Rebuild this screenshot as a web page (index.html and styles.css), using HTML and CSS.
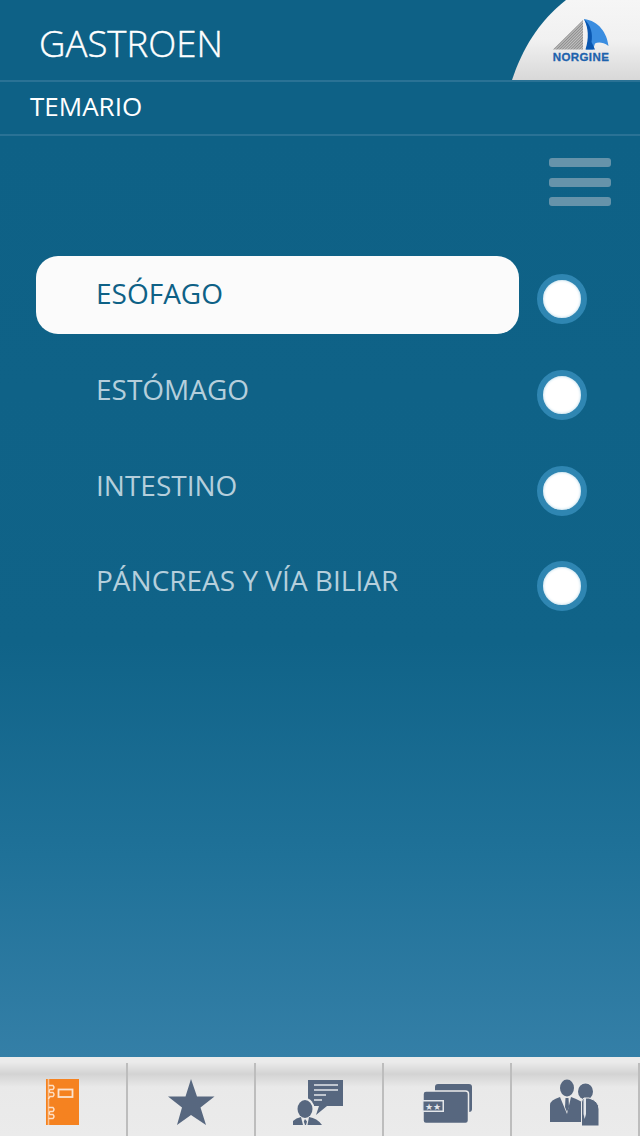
FILE: index.html
```html
<!DOCTYPE html>
<html lang="en">
<head>
    <meta charset="UTF-8">
    <meta name="viewport" content="width=device-width, initial-scale=1.0">
    <title>Gastroen</title>
    <link rel="stylesheet" href="styles.css">
</head>
<body>
    <div class="app">
        <header class="top">
            <h1 class="brand">GASTROEN</h1>
            <svg class="logo" width="128" height="80" viewBox="0 0 128 80">
                <defs>
                    <linearGradient id="corner" x1="0" y1="0" x2="0" y2="1">
                        <stop offset="0" stop-color="#f6f6f6"/>
                        <stop offset="0.5" stop-color="#f1f1f1"/>
                        <stop offset="1" stop-color="#d8d8d8"/>
                    </linearGradient>
                    <pattern id="hatch" width="2" height="2" patternUnits="userSpaceOnUse" patternTransform="rotate(45)">
                        <rect width="2" height="2" fill="#c4c4c4"/>
                        <rect width="1" height="2" fill="#8c8c8c"/>
                    </pattern>
                </defs>
                <path d="M0 80C10 50 26 22 54 0H128V80Z" fill="url(#corner)"/>
                <path d="M41 49.5L71 20V49.5Z" fill="url(#hatch)"/>
                <path d="M72 19C87 21 95 33 96.5 46C91 42 86 42 83 43.5L81 49.5H74C78 38 77 28 72 19Z" fill="#3a8de0"/>
                <path d="M72 19C79 25 81 34 79.5 42L83 49.5H73.5C77 38 76.5 28 72 19Z" fill="#0a57b0"/>
                <text class="logo-text" x="69" y="60.5" text-anchor="middle">NORGINE</text>
            </svg>
        </header>
        <div class="subtitle">TEMARIO</div>

        <main class="content">
            <div class="menu-btn">
                <span></span>
                <span></span>
                <span></span>
            </div>
            <ul class="topics">
                <li class="topic active"><span class="topic-label">ESÓFAGO</span><span class="dot"></span></li>
                <li class="topic"><span class="topic-label">ESTÓMAGO</span><span class="dot"></span></li>
                <li class="topic"><span class="topic-label">INTESTINO</span><span class="dot"></span></li>
                <li class="topic"><span class="topic-label">PÁNCREAS Y VÍA BILIAR</span><span class="dot"></span></li>
            </ul>
        </main>

        <nav class="tabs">
            <div class="tab">
                <svg width="60" height="50" viewBox="0 0 60 50">
                    <rect x="13" y="2" width="33" height="46" fill="#f58220"/>
                    <path d="M15.5 2V48" stroke="#fbc08e" stroke-width="1.5"/>
                    <path d="M15.5 8.5H20Q22 10.5 20 12.5H17Q15.5 14.5 17 15.5H20Q22 17.5 20 19.5H17Q15.5 21.5 15.5 22M15.5 30.5H20Q22 32.5 20 34.5H17Q15.5 36.5 17 37.5H20Q22 39.5 20 41.5H15.5" fill="none" stroke="#fde0c6" stroke-width="1.4"/>
                    <rect x="25.5" y="12.5" width="14" height="7.5" fill="none" stroke="#fbe3cf" stroke-width="1.8"/>
                </svg>
            </div>
            <div class="tab">
                <svg width="60" height="50" viewBox="0 0 60 50">
                    <path d="M30 2L36 19.5H53.5L39.5 30.5L45 48L30 38L16 48L21 30.5L7 19.5H24.5Z" fill="#57677f"/>
                </svg>
            </div>
            <div class="tab">
                <svg width="60" height="50" viewBox="0 0 60 50">
                    <path d="M19 3H54V29H38L27 38L30 29H19Z" fill="#57677f"/>
                    <path d="M25 8H49M25 13H49M25 18H37M25 23H33" stroke="#e3e6ea" stroke-width="1.6"/>
                    <ellipse cx="16" cy="32" rx="9.5" ry="11" fill="#ebebeb"/>
                    <ellipse cx="16" cy="32" rx="7.5" ry="9" fill="#57677f"/>
                    <path d="M4 48V44Q7 41 12 40L14 48ZM16 42L14.8 44.5L16 48H17L18 44.5ZM20 40Q28 41 33 48H18.5Z" fill="#57677f"/>
                </svg>
            </div>
            <div class="tab">
                <svg width="60" height="50" viewBox="0 0 60 50">
                    <rect x="18" y="7" width="37" height="28" rx="3" fill="#57677f"/>
                    <rect x="6" y="14" width="45.5" height="32.5" rx="3" fill="#57677f" stroke="#ebebeb" stroke-width="1.5"/>
                    <rect x="5" y="23" width="22" height="12" fill="#e3e6ea"/>
                    <rect x="6.5" y="24.5" width="19" height="9" fill="#57677f"/>
                    <text class="card-stars" x="16" y="32.5" text-anchor="middle">★★</text>
                </svg>
            </div>
            <div class="tab">
                <svg width="60" height="50" viewBox="0 0 60 50">
                    <ellipse cx="22" cy="11" rx="7" ry="8.5" fill="#57677f"/>
                    <path d="M5 45V28Q5 23 15 20L22 37L26 20Q32 22 37 25V45Z" fill="#57677f"/>
                    <path d="M20.5 21H23.5L24 30L22 35L20 30Z" fill="#57677f"/>
                    <ellipse cx="40.5" cy="14.5" rx="8.5" ry="9" fill="#ebebeb"/>
                    <ellipse cx="40.5" cy="14.5" rx="7.5" ry="8" fill="#57677f"/>
                    <path d="M36.5 49V25Q37 22 39 21H44Q54 24 54 32V49Z" fill="#57677f" stroke="#ebebeb" stroke-width="1"/>
                    <path d="M38.5 21H41L41 37L39.7 42L38.5 37Z" fill="#e3e6ea"/>
                </svg>
            </div>
        </nav>
    </div>
</body>
</html>
```

FILE: styles.css
```css
* {
    box-sizing: border-box;
}
body {
    margin: 0;
    font-family: "Open Sans", sans-serif;
    background-color: #0e6186;
}
.app {
    width: 640px;
    height: 1136px;
    display: flex;
    flex-direction: column;
    overflow: hidden;
}
.top {
    height: 82px;
    flex: none;
    display: flex;
    justify-content: space-between;
    background: #0e6186;
    border-bottom: 2px solid #2a7295;
}
.brand {
    margin: 0;
    padding-left: 39px;
    font-size: 36.6px;
    font-weight: 300;
    line-height: 86px;
    color: #fff;
    -webkit-text-stroke: 0.4px #fff;
}
.logo {
    flex: none;
}
.logo-text {
    font-family: "Liberation Sans", sans-serif;
    font-size: 11.5px;
    font-weight: bold;
    letter-spacing: 0.4px;
    fill: #1d62ad;
    stroke: #1d62ad;
    stroke-width: 0.3px;
}
.subtitle {
    height: 54px;
    flex: none;
    padding-left: 30px;
    font-size: 26px;
    line-height: 48px;
    color: #fff;
    background: #0e6186;
    border-bottom: 2px solid #2a7295;
}
.content {
    flex: 1;
    padding: 22px 29px 0 36px;
    background: linear-gradient(to bottom, #0e6186 0%, #106388 55%, #1f7198 78%, #347fa7 100%);
}
.menu-btn {
    width: 62px;
    margin-left: auto;
    display: flex;
    flex-direction: column;
    gap: 10.5px;
}
.menu-btn span {
    height: 9px;
    background: #6693aa;
    border-radius: 3px;
}
.topics {
    list-style: none;
    margin: 50px 0 0;
    padding: 0 24px 0 0;
    display: flex;
    flex-direction: column;
    gap: 18px;
}
.topic {
    display: flex;
    align-items: flex-start;
    gap: 18px;
    height: 78px;
}
.topic:last-child {
    margin-top: -1px;
}
.topic-label {
    flex: 1;
    height: 78px;
    padding-left: 60px;
    font-size: 28px;
    line-height: 74px;
    color: #b5cfdc;
    border-radius: 22px;
}
.topic.active .topic-label {
    background: #fbfbfb;
    color: #0e6186;
}
.dot {
    flex: none;
    width: 50px;
    height: 50px;
    margin-top: 18px;
    border-radius: 50%;
    background: #fff;
    border: 6px solid #2f86b2;
    box-shadow: inset 0 0 3px #a7d0e4;
}
.tabs {
    height: 79px;
    flex: none;
    padding-top: 6px;
    display: flex;
    background: linear-gradient(to bottom, #ebebeb 0, #ebebeb 5px, #d3d3d3 17px, #e9e9e9 30px, #ebebeb 100%);
}
.tab {
    width: 128px;
    display: flex;
    justify-content: center;
    padding-top: 14px;
    border-right: 2px solid #bdbdbd;
}
.card-stars {
    font-family: "DejaVu Sans", sans-serif;
    font-size: 9px;
    fill: #e3e6ea;
}
```
